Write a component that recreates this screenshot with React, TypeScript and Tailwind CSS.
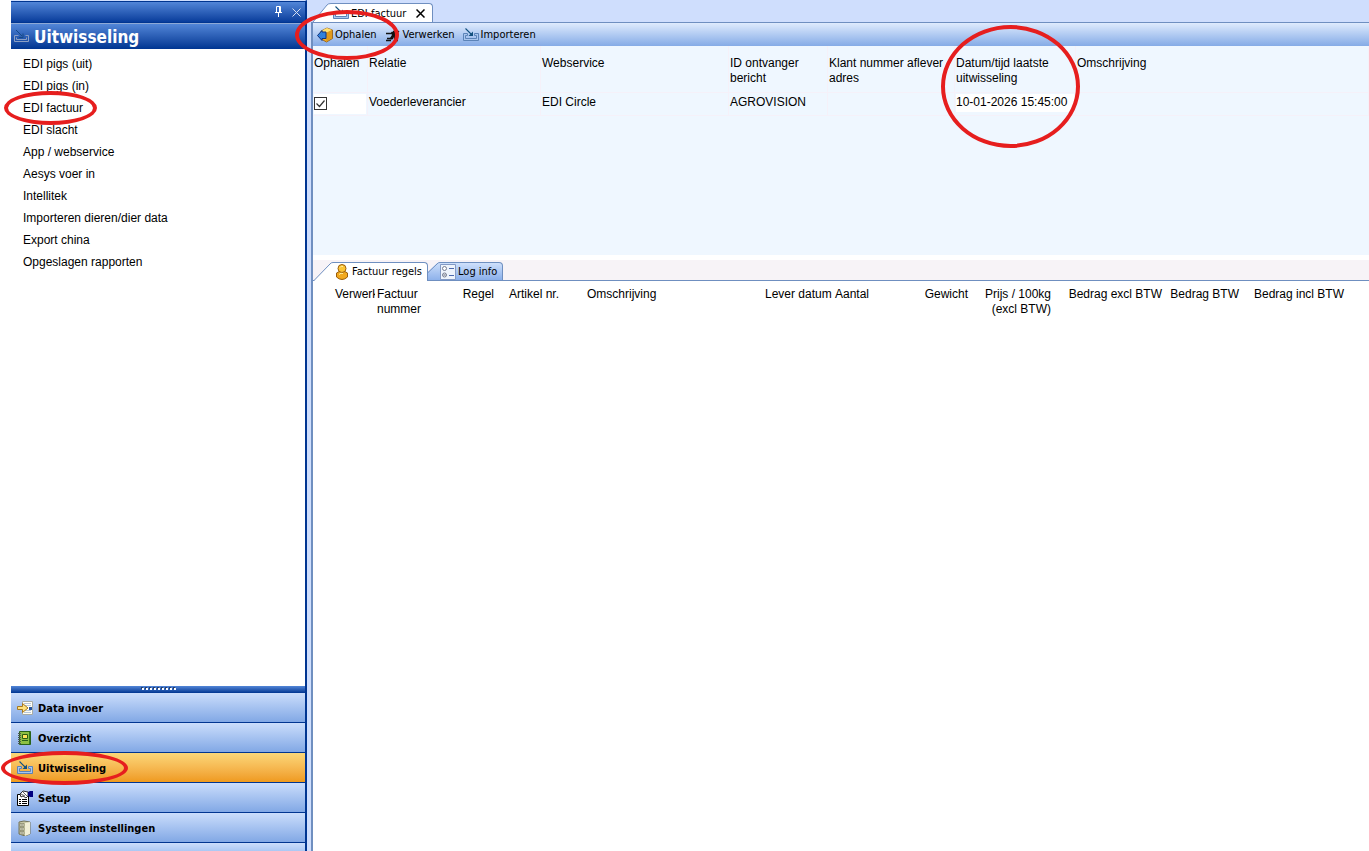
import { useState } from 'react'
import type { ReactNode } from 'react'

const menuItems = [
  'EDI pigs (uit)',
  'EDI pigs (in)',
  'EDI factuur',
  'EDI slacht',
  'App / webservice',
  'Aesys voer in',
  'Intellitek',
  'Importeren dieren/dier data',
  'Export china',
  'Opgeslagen rapporten',
]

const uiFont = "font-['DejaVu_Sans_Condensed','DejaVu_Sans',sans-serif]"

// Red marker drawn around an element
function Ring({ className }: { className: string }) {
  return (
    <span
      aria-hidden="true"
      className={`pointer-events-none absolute z-20 rounded-[50%] border-4 border-[#e61e1e] ${className}`}
    />
  )
}

function Icon({ children, className = '' }: { children: ReactNode; className?: string }) {
  return (
    <svg viewBox="0 0 16 16" aria-hidden="true" className={`size-4 shrink-0 ${className}`}>
      {children}
    </svg>
  )
}

function ImportIcon() {
  return (
    <Icon>
      <path d="M.5 6.500h4v2h-2v3h11v-3h-2v-2h4v7H.5z" fill="#a9c6ee" stroke="#5b83b8" />
      <path d="M2.500 1.500l6 6" stroke="#12507e" strokeWidth="1.100" fill="none" />
      <path d="M10 4.500v4.500H5.500z" fill="#12507e" />
    </Icon>
  )
}

function HeaderIcon() {
  return (
    <Icon>
      <path d="M4.500 6.500h-4v6h14v-6h-3M2.500 8.500v2h10v-2" fill="none" stroke="#8b9fc4" />
      <path d="M2 1l6 6M9 4.500V8.500H5" stroke="#164a86" fill="none" />
    </Icon>
  )
}

function BoxIcon() {
  return (
    <Icon>
      <path d="M4 4l6-3 5.500 2v8.500l-6 3.500L4 12z" fill="#f4b223" stroke="#8a5310" strokeWidth=".8" />
      <path d="M4 4l6-3 5 2-6 3z" fill="#ffe071" />
      <path d="M9 6l6-3v8l-6 4z" fill="#e09a1c" />
      <path d="M5 3.500V5h4v6.500H5v2L.5 8.500z" fill="#3181dc" stroke="#12337c" />
    </Icon>
  )
}

function ProcessIcon() {
  return (
    <Icon>
      <path d="M1 6.500h8M8 4.500h3M8 6.500l-1 5M1 13.500h5M2 11.500h6M10 13.500h3M12 6l2-2" fill="none" stroke="#111" strokeWidth="1.300" />
      <path d="M6 5l5-1v3l-1 1 1 4-1 2-2-4-2 3-1-2 2-3z" fill="#111" />
    </Icon>
  )
}

function PersonIcon() {
  return (
    <Icon>
      <path d="M2.500 9q5.500-4 11 0v4q-5.500 5-11 0z" fill="#f2a91f" stroke="#9a5d0b" />
      <circle cx="8" cy="4.500" r="4" fill="#fbc536" stroke="#9a5d0b" />
      <path d="M6 3.500q1-2 3-1M5 10.500q2-2 4-1" stroke="#fff0a5" fill="none" />
    </Icon>
  )
}

function LogIcon() {
  return (
    <Icon>
      <path d="M.5.5h15v15H.5z" fill="#eef3fb" stroke="#8399c4" />
      <circle cx="4.500" cy="4.500" r="2" fill="#fff" stroke="#777d91" />
      <circle cx="4.500" cy="11" r="2" fill="#fff" stroke="#777d91" />
      <path d="M3.500 10l2 2m0-2l-2 2" stroke="#777d91" strokeWidth=".8" />
      <path d="M9 4.500h5M9 11.500h5" stroke="#4d69ad" />
    </Icon>
  )
}

function DataIcon() {
  return (
    <Icon>
      <path d="M5.500 1.500h10v13h-10z" fill="#fffef4" stroke="#a7aaa4" />
      <path d="M7 3.500h7M7 5.500h7M7 10.500h7M7 12.500h7" stroke="#b8c7db" />
      <path d="M12 7h3v3h-3z" fill="#2856a0" />
      <path d="M.5 6.500h5v-3l5.500 4.500-5.500 4.500v-3h-5z" fill="#ffe17b" stroke="#a77820" />
    </Icon>
  )
}

function BookIcon() {
  return (
    <Icon>
      <path d="M2.500 1.500h11v13h-11z" fill="#8cc043" stroke="#286219" />
      <path d="M12 2h1v12h-1z" fill="#347b1b" />
      <path d="M5.500 4.500h5v4h-5z" fill="#ffe45b" stroke="#2e5d12" />
      <path d="M5 10.500h6" stroke="#28601a" />
      <path d="M1 3.500h3M1 5.500h3M1 7.500h3M1 9.500h3M1 11.500h3M1 13.500h3" stroke="#4c5752" />
    </Icon>
  )
}

function SetupIcon() {
  return (
    <Icon>
      <path d="M.5 4.500h11v11H.5z" fill="#fff" stroke="#000" />
      <path d="M2 9.500h2m1 0h5M2 11.500h2m1 0h5M2 13.500h2m1 0h5" stroke="#000" />
      <path d="M3 4l3-3 5 1v4L9 8 6 6 4 7z" fill="#fff" stroke="#000" strokeWidth=".8" />
      <path d="M4 4l4 2M6 2l4 4" stroke="#000" strokeWidth=".6" />
      <path d="M11 2l2-1h3v6h-3l-2-1z" fill="#000080" />
    </Icon>
  )
}

function CabinetIcon() {
  return (
    <Icon>
      <path d="M2 2l5-1 6 1v12l-5 2-6-2z" fill="#c6c6a4" stroke="#74745a" />
      <path d="M8 3l5-1v12l-5 2z" fill="#f1efd6" />
      <path d="M3 3.500h4v3H3zm0 4h4v3H3zm0 4h4v3H3z" fill="#dcdcc0" stroke="#77775c" strokeWidth=".6" />
      <path d="M4.500 5h1M4.500 9h1M4.500 13h1" stroke="#333" />
    </Icon>
  )
}

const modules = [
  { label: 'Data invoer', icon: <DataIcon /> },
  { label: 'Overzicht', icon: <BookIcon /> },
  { label: 'Uitwisseling', icon: <ImportIcon /> },
  { label: 'Setup', icon: <SetupIcon /> },
  { label: 'Systeem instellingen', icon: <CabinetIcon /> },
]

function Sidebar() {
  return (
    <aside className="flex w-[296px] shrink-0 flex-col border-t border-r-2 border-t-[#cfdefd] border-r-[#003591]">
      <div className="flex h-[22px] items-center justify-end gap-1 border-y border-[#003591] bg-linear-to-b from-[#5286d8] to-[#073c9b] pr-[3px] text-white">
        <button aria-label="Vastzetten" className="flex size-4 items-center justify-center">
          <svg viewBox="0 0 9 12" className="h-3 w-[9px]" fill="none" stroke="currentColor">
            <path d="M2.500 6V.5h4V6M5.500 0v6M1 6.500h7M4.500 7v4" />
          </svg>
        </button>
        <button aria-label="Paneel sluiten" className="flex size-3 items-center justify-center">
          <svg viewBox="0 0 9 9" className="size-[9px]" fill="none" stroke="#d5dff2">
            <path d="M.5.5l8 8m0-8l-8 8" />
          </svg>
        </button>
      </div>
      <div className="flex h-[26px] items-center gap-1 border-t border-[#8ea9d6] bg-linear-to-b from-[#5286d8] to-[#003591] pl-[3px]">
        <HeaderIcon />
        <h1 className={`${uiFont} text-[17px] leading-[22px] font-bold text-white`}>Uitwisseling</h1>
      </div>

      <nav className="flex-1 pt-1">
        <ul>
          {menuItems.map((item) => (
            <li key={item} className="flex h-[22px] items-center pl-3">
              <a href="#" className="relative whitespace-nowrap">
                {item}
                {item === 'EDI factuur' && <Ring className="-top-2.5 -left-[19px] h-[34px] w-[93px]" />}
              </a>
            </li>
          ))}
        </ul>
      </nav>

      <div className="flex h-[7px] items-start justify-center gap-0.5 bg-linear-to-b from-[#5286d8] to-[#003591] pt-0.5 pl-0.5">
        {[...Array(9)].map((_, i) => (
          <span key={i} className="size-0.5 bg-white shadow-[-1px_-1px_0_#27406e]" />
        ))}
      </div>
      <div className={`${uiFont} text-[11px] font-bold`}>
        {modules.map(({ label, icon }) => (
          <button
            key={label}
            className={`relative flex h-[30px] w-full items-center gap-[5px] border-b border-[#003591] bg-linear-to-b pt-px pl-1.5 ${
              label === 'Uitwisseling' ? 'from-[#fbd778] to-[#ef9a1c]' : 'from-[#cbddfb] to-[#82a8e5]'
            }`}
          >
            {icon}
            {label}
            {label === 'Uitwisseling' && <Ring className="-top-0.5 -left-2.5 h-[34px] w-[127px]" />}
          </button>
        ))}
      </div>
      <div className="h-2 bg-linear-to-b from-[#cbddfb] to-[#abc8f4]" />
    </aside>
  )
}

function Toolbar() {
  return (
    <div className={`${uiFont} flex h-[23px] items-center gap-2 bg-linear-to-b from-[#dfebfd] to-[#85abe6] pl-1 text-[11px]`}>
      <button className="relative flex items-center gap-0.5">
        <BoxIcon />
        Ophalen
        <Ring className="-top-[17px] -left-[22px] h-[50px] w-[104px]" />
      </button>
      <button className="flex items-center gap-0.5">
        <ProcessIcon />
        Verwerken
      </button>
      <button className="flex items-center gap-0.5">
        <ImportIcon />
        Importeren
      </button>
    </div>
  )
}

function RelationTable() {
  const [checked, setChecked] = useState(true)
  const th = 'h-[47px] border-r border-b border-[#f5f1f9] px-px pt-2.5 align-top text-left font-normal whitespace-nowrap'
  const td = 'h-[23px] border-r border-b border-[#f5f1f9] px-px pt-0.5 align-top whitespace-nowrap'
  const editTd = 'h-[23px] border-r border-b border-[#f5f1f9] px-px pt-px align-top'

  return (
    <table className="w-full table-fixed border-separate border-spacing-0">
      <colgroup>
        <col className="w-[55px]" />
        <col className="w-[173px]" />
        <col className="w-[188px]" />
        <col className="w-[99px]" />
        <col className="w-[127px]" />
        <col className="w-[121px]" />
        <col />
      </colgroup>
      <thead>
        <tr>
          <th className={th}>Ophalen</th>
          <th className={th}>Relatie</th>
          <th className={th}>Webservice</th>
          <th className={th}>ID ontvanger<br />bericht</th>
          <th className={th}>Klant nummer aflever<br />adres</th>
          <th className={`${th} relative`}>
            Datum/tijd laatste<br />uitwisseling
            <Ring className="-top-[21px] -left-3.5 h-[123px] w-[139px]" />
          </th>
          <th className={th}>Omschrijving</th>
        </tr>
      </thead>
      <tbody>
        <tr>
          <td className={editTd}>
            <label className="flex h-5 items-start bg-white pt-[3px]">
              <span className="relative flex">
                <input
                  type="checkbox"
                  aria-label="Ophalen"
                  checked={checked}
                  onChange={(e) => setChecked(e.target.checked)}
                  className="size-[13px] appearance-none border border-[#333] bg-white"
                />
                {checked && (
                  <svg viewBox="0 0 13 13" className="pointer-events-none absolute inset-0 size-[13px]">
                    <path d="M2.500 6.500l3 3 5-6" fill="none" stroke="#333" strokeWidth="1.200" />
                  </svg>
                )}
              </span>
            </label>
          </td>
          <td className={td}>Voederleverancier</td>
          <td className={td}>EDI Circle</td>
          <td className={td}>AGROVISION</td>
          <td className={td}></td>
          <td className={editTd}>
            <input
              aria-label="Datum/tijd laatste uitwisseling"
              defaultValue="10-01-2026 15:45:00"
              className="block h-[18px] w-full bg-white pb-0.5"
            />
          </td>
          <td className={td}></td>
        </tr>
      </tbody>
    </table>
  )
}

function InvoiceLines() {
  const th = 'px-0.5 pt-1.5 align-top text-left font-normal whitespace-nowrap'
  const right = 'px-0.5 pt-1.5 align-top text-right font-normal whitespace-nowrap'

  return (
    <table className="w-full table-fixed">
      <colgroup>
        <col className="w-5" />
        <col className="w-[42px]" />
        <col className="w-[65px]" />
        <col className="w-[56px]" />
        <col className="w-[89px]" />
        <col className="w-[178px]" />
        <col className="w-[70px]" />
        <col className="w-[57px]" />
        <col className="w-[80px]" />
        <col className="w-[83px]" />
        <col className="w-[111px]" />
        <col className="w-[77px]" />
        <col className="w-[105px]" />
        <col />
      </colgroup>
      <thead>
        <tr>
          <td></td>
          <th className="overflow-hidden pt-1.5 pl-0.5 text-left align-top font-normal">Verwerk</th>
          <th className={th}>Factuur<br />nummer</th>
          <th className={right}>Regel</th>
          <th className={`${th} pl-[13px]`}>Artikel nr.</th>
          <th className={th}>Omschrijving</th>
          <th className={th}>Lever datum</th>
          <th className={th}>Aantal</th>
          <th className={right}>Gewicht</th>
          <th className={right}>Prijs / 100kg<br />(excl BTW)</th>
          <th className={right}>Bedrag excl BTW</th>
          <th className={right}>Bedrag BTW</th>
          <th className={right}>Bedrag incl BTW</th>
          <td></td>
        </tr>
      </thead>
    </table>
  )
}

export default function App() {
  return (
    <div className="flex h-screen overflow-hidden bg-white pl-[11px] font-['Liberation_Sans',Arial,sans-serif] text-[12px] leading-[15px] text-black">
      <Sidebar />

      <main className="flex min-w-0 flex-1 flex-col bg-[#cfdefd] pl-1">
        <div className={`${uiFont} flex h-[22px] shrink-0 items-end text-[11px]`}>
          <svg viewBox="0 0 20 19" className="h-[19px] w-5 shrink-0">
            <path d="M2 19L16 2l4-2v19z" fill="#fff" />
            <path d="M2 19L16 2q1-1.500 4-1.500" fill="none" stroke="#6f8fc0" />
          </svg>
          <div className="flex h-[19px] items-center rounded-tr-sm border-t border-r border-[#6f8fc0] bg-white pr-[7px] pl-0.5">
            <ImportIcon />
            <span className="pl-0.5">EDI factuur</span>
            <button aria-label="Tab sluiten" className="ml-[9px] flex size-2.5 items-center justify-center">
              <svg viewBox="0 0 9 9" className="size-[9px]" fill="none" stroke="#000" strokeWidth="1.500">
                <path d="M.5.5l8 8m0-8l-8 8" />
              </svg>
            </button>
          </div>
        </div>

        <div className="flex flex-1 flex-col border-t border-l-2 border-[#6f8fc0] bg-white">
          <Toolbar />
          <section className="h-[209px] shrink-0 bg-[#eff7ff]">
            <RelationTable />
          </section>

          <div className={`${uiFont} mt-[5px] flex h-[21px] shrink-0 items-end border-b border-[#6f8fc0] bg-[#f7f3f7] text-[11px]`}>
            <div role="tablist" className="-mb-px flex h-[19px]">
              <svg viewBox="0 0 20 19" className="h-[19px] w-5 shrink-0">
                <path d="M1 19L17 2l3-2v19z" fill="#fff" />
                <path d="M0 18.500h1L17 2q1-1.500 3-1.500" fill="none" stroke="#6f8fc0" />
              </svg>
              <button
                role="tab"
                aria-selected="true"
                className="flex items-center gap-0.5 rounded-tr-sm border-t border-r border-[#6f8fc0] bg-white pr-[5px] pb-px pl-px"
              >
                <PersonIcon />
                Factuur regels
              </button>
              <svg viewBox="0 0 12 19" className="h-[19px] w-3 shrink-0">
                <defs>
                  <linearGradient id="logTab" x1="0" x2="0" y1="0" y2="1">
                    <stop offset="0" stopColor="#cfe0fb" />
                    <stop offset="1" stopColor="#8aafea" />
                  </linearGradient>
                </defs>
                <path d="M0 10L9 1l3-1v19H0z" fill="url(#logTab)" />
                <path d="M0 10.500L9 2q1-1.500 3-1.500M0 18.500h12" fill="none" stroke="#6f8fc0" />
              </svg>
              <button
                role="tab"
                aria-selected="false"
                className="flex items-center gap-0.5 rounded-tr-sm border-y border-r border-[#6f8fc0] bg-linear-to-b from-[#cfe0fb] to-[#8aafea] pr-[5px]"
              >
                <LogIcon />
                Log info
              </button>
            </div>
          </div>
          <InvoiceLines />
        </div>
      </main>
    </div>
  )
}
